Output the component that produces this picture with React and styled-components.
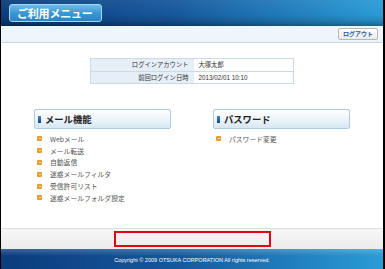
import React from "react";
import styled, { createGlobalStyle } from "styled-components";

const GlobalStyle = createGlobalStyle`
  html, body {
    margin: 0;
    padding: 0;
    background: #fff;
  }
  * {
    box-sizing: border-box;
  }
`;

const Page = styled.div`
  width: 385px;
  height: 269px;
  display: flex;
  flex-direction: column;
  border-left: 1px solid #000;
  border-right: 2px solid #000;
  font-family: "Noto Sans CJK JP", "Noto Sans", sans-serif;
  overflow: hidden;
`;

const Header = styled.div`
  height: 26px;
  flex-shrink: 0;
  display: flex;
  align-items: flex-start;
  padding: 4px 0 0 8px;
  background:
    linear-gradient(to bottom, rgba(255, 255, 255, 0.06) 0%, rgba(255, 255, 255, 0) 55%, rgba(0, 0, 0, 0.12) 80%, rgba(0, 0, 0, 0.35) 100%),
    linear-gradient(to right, #0b3c7c 0%, #16579c 45%, #2a9cd6 100%);
`;

const TitleButton = styled.div`
  width: 93px;
  height: 18px;
  border: 1px solid #a5d6f2;
  border-radius: 3px;
  background: linear-gradient(to bottom, #6cbde8 0%, #3b98d3 50%, #2b84c4 100%);
  color: #fff;
  font-size: 11px;
  font-weight: 700;
  line-height: 16px;
  padding-left: 7px;
  letter-spacing: -0.2px;
`;

const SubBar = styled.div`
  height: 17px;
  flex-shrink: 0;
  background: #eef6fc;
  border-bottom: 1px solid #c5d8e6;
  display: flex;
  justify-content: flex-end;
  align-items: flex-start;
  padding: 2px 5px 0 0;
`;

const LogoutButton = styled.button`
  height: 12px;
  width: 40px;
  padding: 0;
  border: 1px solid #b7b7b7;
  border-radius: 2px;
  background: linear-gradient(to bottom, #ffffff 0%, #ececec 100%);
  color: #1d5a9e;
  font-family: inherit;
  font-size: 6px;
  font-weight: 700;
  line-height: 10px;
  cursor: pointer;
`;

const Main = styled.div`
  flex: 1;
  display: flex;
  flex-direction: column;
  align-items: center;
  padding-top: 15px;
  background: #fff;
`;

const InfoTable = styled.table`
  width: 204px;
  border-collapse: collapse;
  border: 1px solid #c9dbea;
  font-size: 6.3px;
  color: #333;
`;

const LabelCell = styled.th`
  width: 103px;
  height: 12.5px;
  padding: 0 5px 0 0;
  background: #e6eff8;
  border-bottom: 1px solid #c9dbea;
  text-align: right;
  font-weight: 400;
  color: #333;
`;

const ValueCell = styled.td`
  padding: 0 0 0 5px;
  border-bottom: 1px solid #c9dbea;
  background: #fff;
  font-family: "Liberation Sans", "Noto Sans CJK JP", sans-serif;
`;

const Columns = styled.div`
  display: flex;
  gap: 42px;
  margin-top: 25px;
`;

const Section = styled.div`
  width: 137px;
`;

const SectionHead = styled.div`
  height: 20px;
  display: flex;
  align-items: center;
  gap: 4px;
  padding-left: 3px;
  border: 1px solid #aecbe2;
  border-radius: 2px;
  background: linear-gradient(to bottom, #ffffff 0%, #f0f6fb 45%, #d7e7f3 100%);
  color: #222;
  font-size: 9.3px;
  font-weight: 700;
`;

const HeadMark = styled.span`
  width: 3px;
  height: 7px;
  background: linear-gradient(to bottom, #3b8ad0, #123f88);
`;

const List = styled.ul`
  list-style: none;
  margin: 4px 0 0;
  padding: 0 0 0 3px;
`;

const Item = styled.li`
  display: flex;
  align-items: center;
  gap: 8px;
  height: 11.8px;
  font-size: 6.8px;
  color: #555;
`;

const Bullet = styled.span`
  position: relative;
  width: 5px;
  height: 5px;
  flex-shrink: 0;
  background: #f1982c;
  border-radius: 1px;

  &::after {
    content: "";
    position: absolute;
    left: 1.5px;
    top: 2px;
    width: 2px;
    height: 1px;
    background: #fde3b8;
  }
`;

const Strip = styled.div`
  height: 21px;
  flex-shrink: 0;
  display: flex;
  justify-content: center;
  align-items: center;
  border-top: 1px solid #dedede;
  background: linear-gradient(to bottom, #f6f6f6 0%, #ececec 100%);
`;

const RedBox = styled.div`
  width: 157px;
  height: 16px;
  border: 2px solid #e60012;
`;

const Footer = styled.div`
  height: 20px;
  flex-shrink: 0;
  display: flex;
  justify-content: center;
  align-items: center;
  padding-top: 2px;
  background:
    linear-gradient(to bottom, rgba(255, 255, 255, 0.2) 0%, rgba(255, 255, 255, 0) 35%),
    linear-gradient(to right, #0b3c7c 0%, #16579c 45%, #2a9cd6 100%);
  color: #fff;
  font-family: "Liberation Sans", Arial, sans-serif;
  font-size: 5.5px;
`;

const mailMenu = [
  "Webメール",
  "メール転送",
  "自動返信",
  "迷惑メールフィルタ",
  "受信許可リスト",
  "迷惑メールフォルダ設定",
];

const passwordMenu = ["パスワード変更"];

const MenuSection = ({ title, items }) => (
  <Section>
    <SectionHead>
      <HeadMark />
      {title}
    </SectionHead>
    <List>
      {items.map((item) => (
        <Item key={item}>
          <Bullet />
          {item}
        </Item>
      ))}
    </List>
  </Section>
);

export default function App() {
  return (
    <>
      <GlobalStyle />
      <Page>
        <Header>
          <TitleButton>ご利用メニュー</TitleButton>
        </Header>
        <SubBar>
          <LogoutButton>ログアウト</LogoutButton>
        </SubBar>
        <Main>
          <InfoTable>
            <tbody>
              <tr>
                <LabelCell>ログインアカウント</LabelCell>
                <ValueCell>大塚太郎</ValueCell>
              </tr>
              <tr>
                <LabelCell>前回ログイン日時</LabelCell>
                <ValueCell>2013/02/01 10:10</ValueCell>
              </tr>
            </tbody>
          </InfoTable>
          <Columns>
            <MenuSection title="メール機能" items={mailMenu} />
            <MenuSection title="パスワード" items={passwordMenu} />
          </Columns>
        </Main>
        <Strip>
          <RedBox />
        </Strip>
        <Footer>Copyright © 2009 OTSUKA CORPORATION All rights reserved.</Footer>
      </Page>
    </>
  );
}
